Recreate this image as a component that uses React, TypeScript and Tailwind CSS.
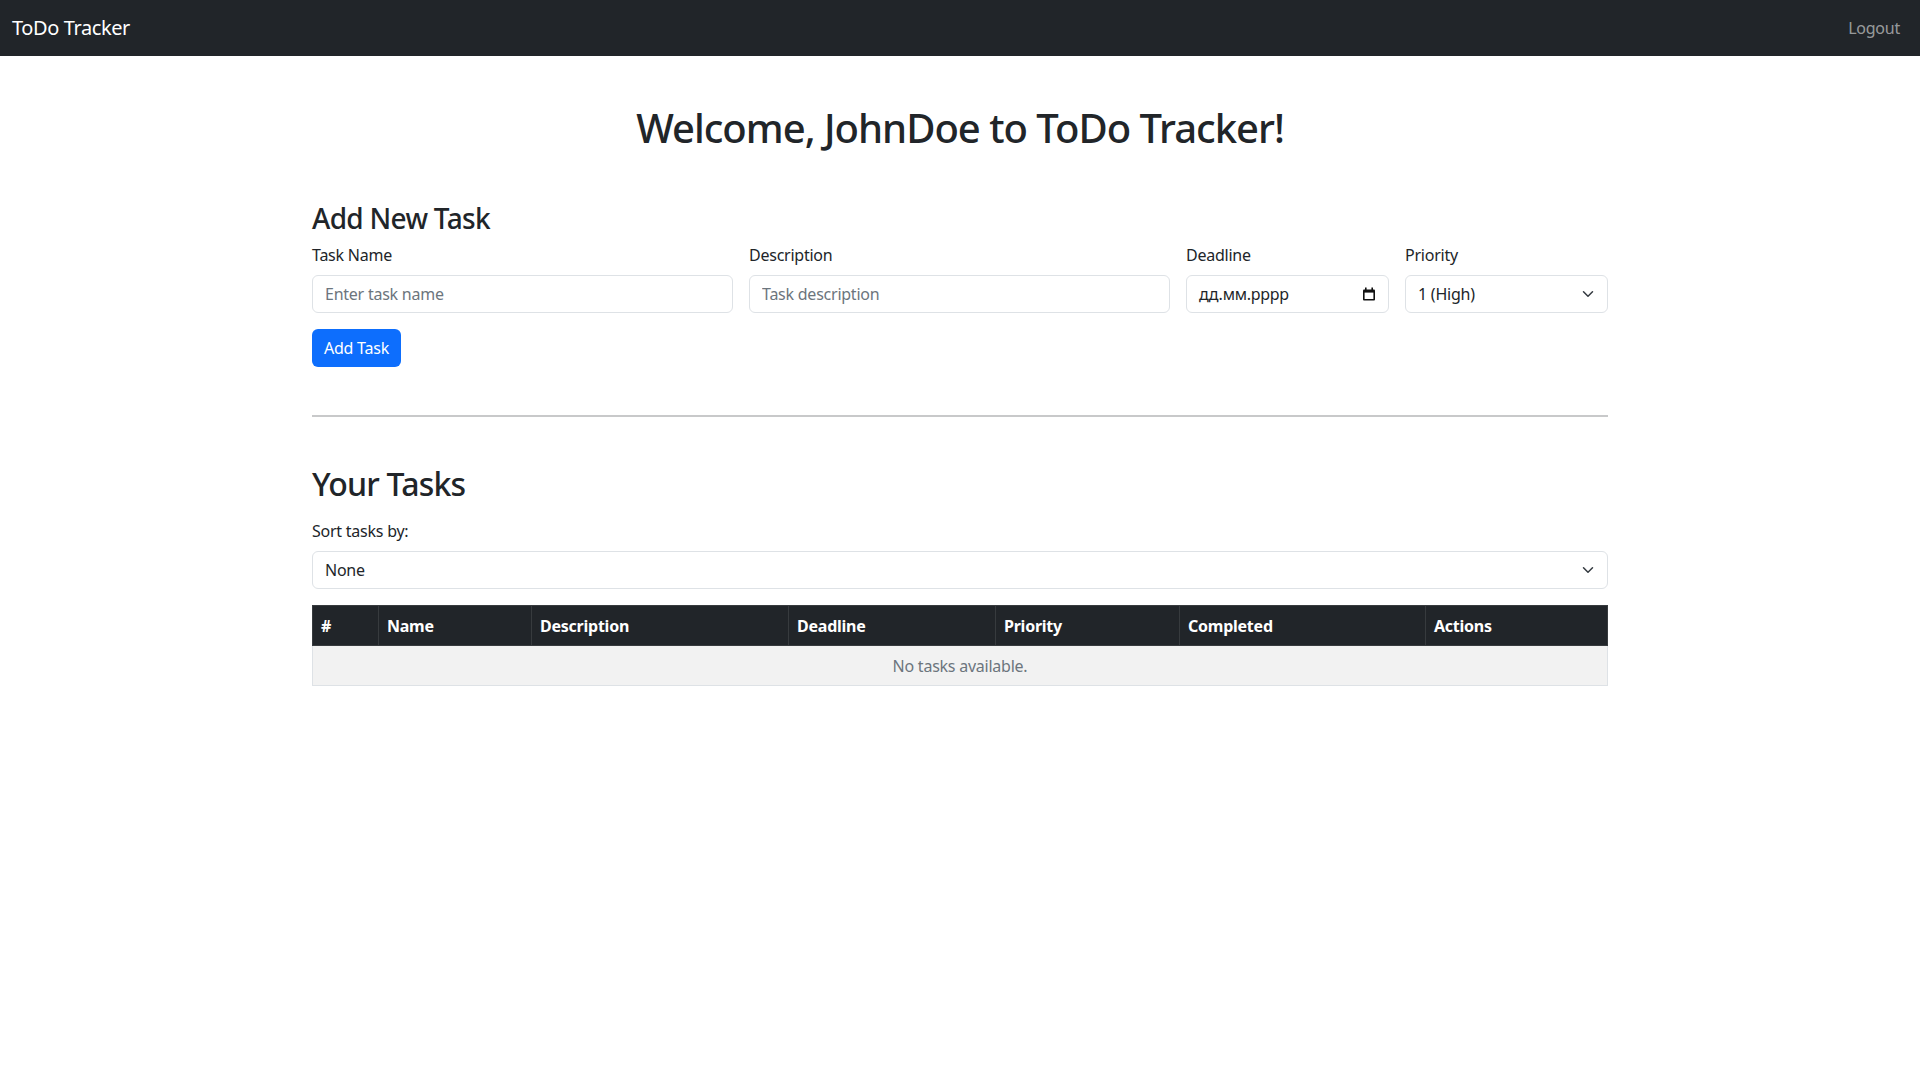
import { useState } from "react";

const columns = [
  { name: "#", width: "w-[66px]" },
  { name: "Name", width: "w-[153px]" },
  { name: "Description", width: "w-[257px]" },
  { name: "Deadline", width: "w-[207px]" },
  { name: "Priority", width: "w-[184px]" },
  { name: "Completed", width: "w-[246px]" },
  { name: "Actions", width: "w-[182px]" },
];

function Chevron() {
  return (
    <svg
      width="16"
      height="12"
      viewBox="0 0 16 16"
      className="absolute right-3 top-1/2 -translate-y-1/2 pointer-events-none"
    >
      <path
        d="m2 5 6 6 6-6"
        fill="none"
        stroke="#343a40"
        strokeWidth="2"
        strokeLinecap="round"
        strokeLinejoin="round"
      />
    </svg>
  );
}

function CalendarIcon() {
  return (
    <svg width="14" height="14" viewBox="0 0 14 14">
      <rect x="3" y="0.5" width="1.6" height="3" fill="#111" />
      <rect x="9.4" y="0.5" width="1.6" height="3" fill="#111" />
      <rect x="1" y="2.5" width="12" height="11" rx="1" fill="#111" />
      <rect x="2.6" y="5.6" width="8.8" height="6.4" fill="#fff" />
    </svg>
  );
}

export default function App() {
  const [taskName, setTaskName] = useState("");
  const [description, setDescription] = useState("");
  const [priority, setPriority] = useState("1");
  const [sortBy, setSortBy] = useState("none");

  const inputClass =
    "w-full min-w-0 h-[38px] px-3 text-base text-[#212529] bg-white border border-[#dee2e6] rounded-[6px] outline-none placeholder:text-[#6c757d]";

  return (
    <div className="min-h-screen bg-white text-[#212529] font-['Noto_Sans',sans-serif] text-base tracking-[-0.015em]">
      {/*header*/}
      <nav className="h-14 bg-[#212529] flex items-center justify-between px-3">
        <span className="text-xl text-white leading-[30px] tracking-[-0.02em]">ToDo Tracker</span>
        <span className="px-2 text-base text-[#ffffff8c]">Logout</span>
      </nav>

      {/*main*/}
      <div className="w-[1296px] mx-auto">
        <h1 className="mt-12 text-center text-[40px] font-medium leading-[48px] tracking-[-0.025em]">
          Welcome, JohnDoe to ToDo Tracker!
        </h1>

        <h3 className="mt-[49px] mb-2 text-[28px] font-medium leading-[34px] tracking-[-0.025em]">
          Add New Task
        </h3>
        <div className="grid grid-cols-[421px_421px_203px_203px] gap-x-4">
          <div className="min-w-0">
            <label className="block mb-2 leading-6">Task Name</label>
            <input
              className={inputClass}
              placeholder="Enter task name"
              value={taskName}
              onChange={(e) => setTaskName(e.target.value)}
            />
          </div>
          <div className="min-w-0">
            <label className="block mb-2 leading-6">Description</label>
            <input
              className={inputClass}
              placeholder="Task description"
              value={description}
              onChange={(e) => setDescription(e.target.value)}
            />
          </div>
          <div className="min-w-0">
            <label className="block mb-2 leading-6">Deadline</label>
            <div className="h-[38px] px-3 flex items-center justify-between border border-[#dee2e6] rounded-[6px]">
              <span className="text-[#212529]">дд.мм.рррр</span>
              <CalendarIcon />
            </div>
          </div>
          <div className="min-w-0">
            <label className="block mb-2 leading-6">Priority</label>
            <div className="relative">
              <select
                className={inputClass + " appearance-none pr-9"}
                value={priority}
                onChange={(e) => setPriority(e.target.value)}
              >
                <option value="1">1 (High)</option>
                <option value="2">2 (Medium)</option>
                <option value="3">3 (Low)</option>
              </select>
              <Chevron />
            </div>
          </div>
        </div>
        <button className="mt-4 h-[38px] px-3 bg-[#0d6efd] text-white rounded-[6px]">Add Task</button>

        <hr className="mt-12 mb-12 border-0 h-[2px] bg-[#c8c9ca]" />

        <h2 className="text-[32px] font-medium leading-[38px] mb-4 tracking-[-0.025em]">Your Tasks</h2>
        <label className="block mb-2 leading-6">Sort tasks by:</label>
        <div className="relative">
          <select
            className={inputClass + " appearance-none pr-9"}
            value={sortBy}
            onChange={(e) => setSortBy(e.target.value)}
          >
            <option value="none">None</option>
            <option value="priority">Priority</option>
            <option value="deadline">Deadline</option>
          </select>
          <Chevron />
        </div>

        <table className="mt-4 w-full border-collapse">
          <thead>
            <tr className="bg-[#212529] text-white">
              {columns.map((col) => (
                <th
                  key={col.name}
                  className={`${col.width} h-10 px-2 text-left font-bold border border-[#373b3e]`}
                >
                  {col.name}
                </th>
              ))}
            </tr>
          </thead>
          <tbody>
            <tr className="bg-[#f2f2f2]">
              <td colSpan={7} className="h-10 px-2 text-center text-[#6c757d] border border-[#dee2e6]">
                No tasks available.
              </td>
            </tr>
          </tbody>
        </table>
      </div>
    </div>
  );
}
